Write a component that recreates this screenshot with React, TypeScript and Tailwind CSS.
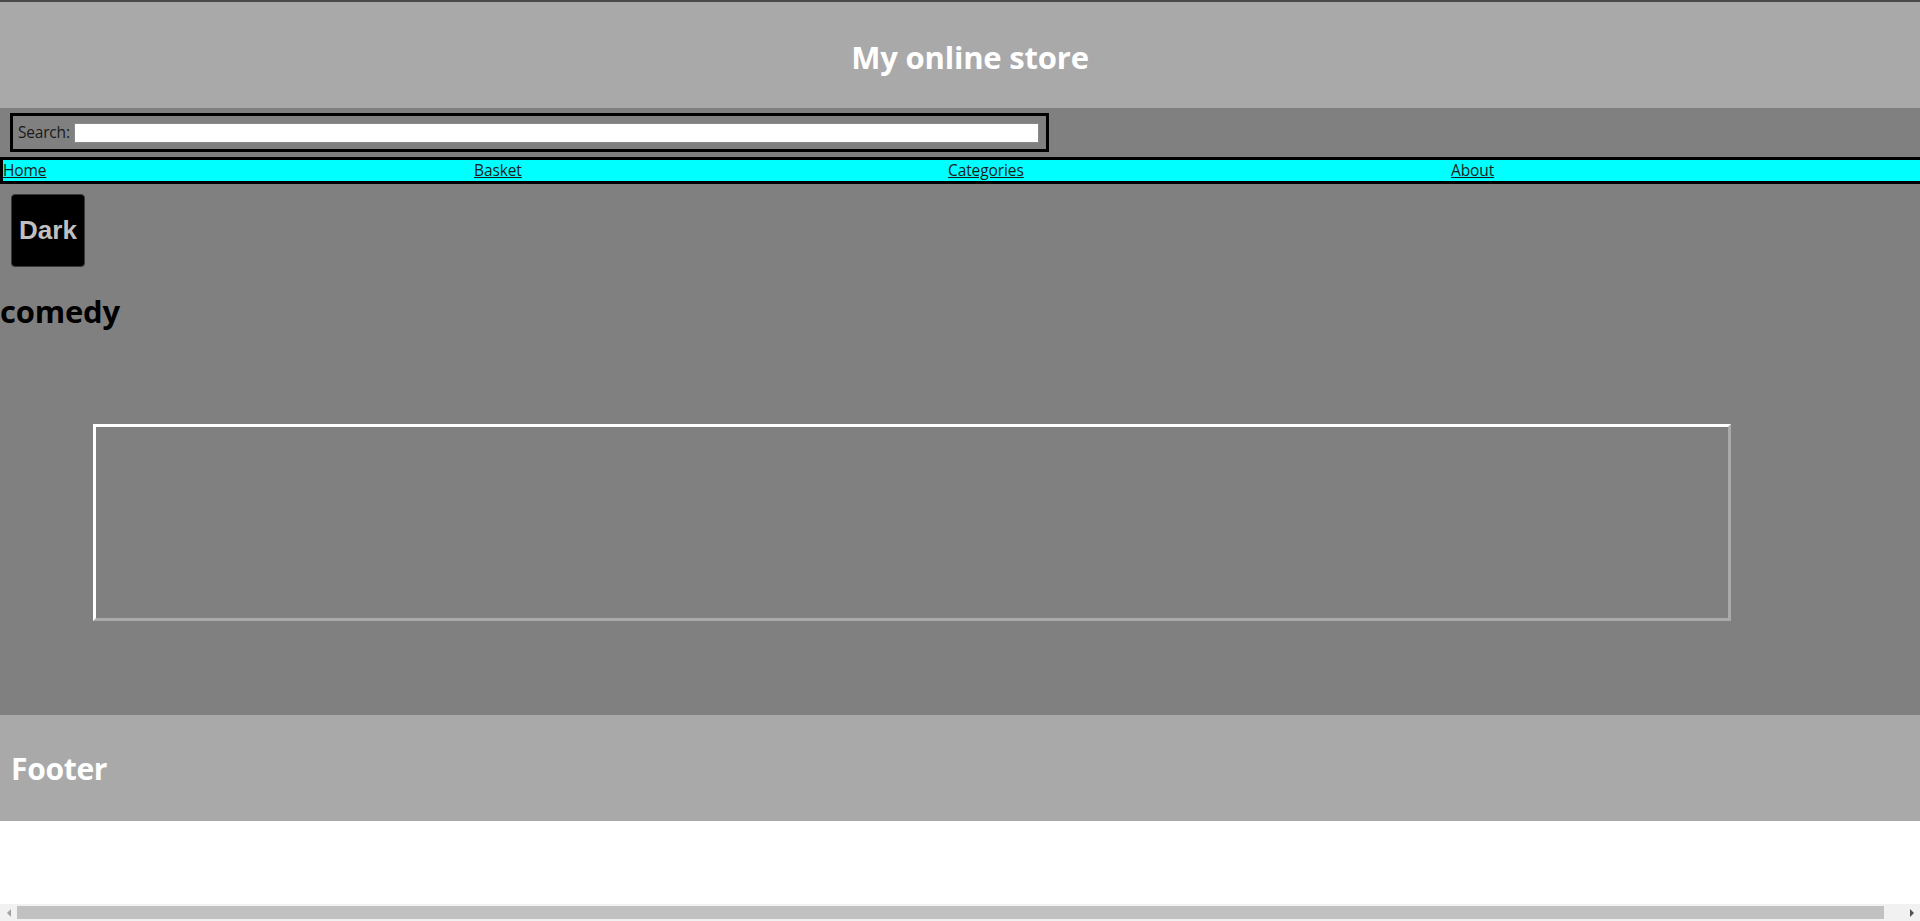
import React from 'react';

const links = [
  { label: 'Home', w: 'w-[471px]' },
  { label: 'Basket', w: 'w-[474px]' },
  { label: 'Categories', w: 'w-[503px]' },
  { label: 'About', w: 'flex-1' },
];

export default function App() {
  return (
    <div className="h-screen overflow-hidden flex flex-col bg-white font-['Open_Sans',sans-serif]">
      <div className="h-[2px] bg-[#4a4a4a]" />

      {/* header */}
      <header className="h-[106px] bg-[#a9a9a9] flex items-center justify-center pl-[20px] pt-[4px]">
        <h1 className="text-[31px] font-bold text-white leading-none tracking-[-0.2px]">My online store</h1>
      </header>

      {/* search */}
      <div className="h-[49px] bg-[#808080] pl-[10px] pt-[5px]">
        <div className="w-[1039px] h-[39px] border-[3px] border-black flex items-center pl-[5px] gap-[4px] text-[15.5px] text-[#1a1a1a]">
          <span className="tracking-[-0.2px]">Search:</span>
          <input className="w-[965px] h-[20px] bg-white border border-[#8a8a8a] outline-none" />
        </div>
      </div>

      {/* nav */}
      <nav className="h-[27px] bg-[#00ffff] border-[3px] border-r-0 border-black flex items-center pt-[1px] text-[15.5px]">
        {links.map((l) => (
          <div key={l.label} className={l.w}>
            <a href="#" className="underline text-[#1a1a1a] tracking-[-0.1px]">{l.label}</a>
          </div>
        ))}
      </nav>

      {/* main */}
      <main className="h-[531px] bg-[#808080] flex flex-col items-start">
        <button className="mt-[10px] ml-[11px] w-[74px] h-[73px] bg-black border border-[#3a3a3a] rounded-[4px] text-[#c0c0c0] text-[26px] font-bold font-['Liberation_Sans',Arial,sans-serif]">
          Dark
        </button>
        <h2 className="mt-[24px] text-[31px] font-bold leading-[40px] text-black tracking-[-0.2px]">comedy</h2>
        <div className="mt-[93px] ml-[93px] w-[1638px] h-[197px] border-[3px] border-t-white border-l-white border-b-[#aaaaaa] border-r-[#aaaaaa]" />
      </main>

      {/* footer */}
      <footer className="h-[106px] bg-[#a9a9a9] flex items-center px-[11px]">
        <h2 className="text-[30px] font-bold text-white tracking-[-0.3px]">Footer</h2>
      </footer>

      <div className="flex-1" />

      {/* horizontal scrollbar look-alike */}
      <div className="h-[17px] bg-[#f1f1f1] flex items-center">
        <div className="w-[17px] h-full flex items-center justify-center">
          <div className="w-0 h-0 border-y-[4px] border-y-transparent border-r-[4px] border-r-[#a3a3a3]" />
        </div>
        <div className="flex-1 h-[13px] bg-[#c1c1c1] mr-[19px]" />
        <div className="w-[17px] h-full flex items-center justify-center">
          <div className="w-0 h-0 border-y-[4px] border-y-transparent border-l-[4px] border-l-[#505050]" />
        </div>
      </div>
    </div>
  );
}
